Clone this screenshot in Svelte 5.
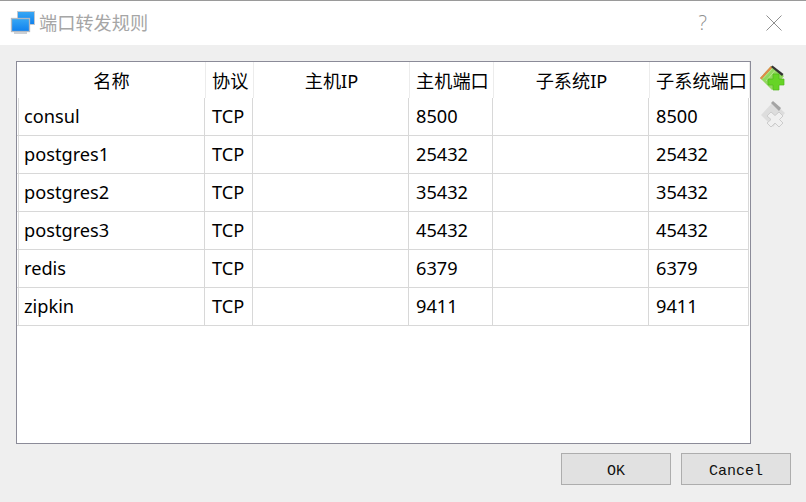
<script>
    const columns = [
        { label: '名称', width: 188, center: true },
        { label: '协议', width: 48 },
        { label: '主机IP', width: 156, center: true },
        { label: '主机端口', width: 84 },
        { label: '子系统IP', width: 156, center: true },
        { label: '子系统端口', width: 100 }
    ]
    const rows = [
        ['consul', 'TCP', '', '8500', '', '8500'],
        ['postgres1', 'TCP', '', '25432', '', '25432'],
        ['postgres2', 'TCP', '', '35432', '', '35432'],
        ['postgres3', 'TCP', '', '45432', '', '45432'],
        ['redis', 'TCP', '', '6379', '', '6379'],
        ['zipkin', 'TCP', '', '9411', '', '9411']
    ]
    const template = columns.map((c) => c.width + 'px').join(' ')
</script>

<div class="dialog">
    <div class="titlebar">
        <svg class="app-icon" width="26" height="26" viewBox="0 0 26 26">
            <defs>
                <linearGradient id="screen" x1="0" y1="0" x2="0" y2="1">
                    <stop offset="0" stop-color="#38a8f4" />
                    <stop offset="1" stop-color="#0f80ee" />
                </linearGradient>
            </defs>
            <rect x="7.500" y="1.500" width="17" height="13" fill="url(#screen)" stroke="#c2c8d0" />
            <rect x="1.500" y="8.500" width="18" height="13" fill="url(#screen)" stroke="#b4bac2" stroke-width="1.300" />
            <path d="M4 22h13v2H4z" fill="#cdd0d4" />
        </svg>
        <span class="title">端口转发规则</span>
        <span class="help">?</span>
        <svg class="close" width="16" height="16" viewBox="0 0 16 16">
            <path d="M.5.5l15 15M15.500.5l-15 15" stroke="#8f8f8f" fill="none" />
        </svg>
    </div>

    <div class="content">
        <div class="frame">
            <div class="row head" style="grid-template-columns: {template}">
                {#each columns as col}
                    <div class="cell" class:center={col.center}>{col.label}</div>
                {/each}
            </div>
            {#each rows as row}
                <div class="row body-row" style="grid-template-columns: {template}">
                    {#each row as value}
                        <div class="cell">{value}</div>
                    {/each}
                </div>
            {/each}
        </div>

        <div class="tools">
            <svg width="28" height="28" viewBox="0 0 28 28">
                <path d="M1 14L12 2l13 10-12 14z" fill="#92d860" />
                <path d="M1 14L12 2l1.500 1.500L2.500 15.500z" fill="#e08a4a" />
                <path d="M4 14.500L13.500 4.500M7 17L16 6.500" stroke="#b6e88e" fill="none" />
                <path d="M12 3l1.500-1.500 11 8.500-1.500 2z" fill="#333" />
                <path d="M14 10h6v5h5v6h-5v5h-6v-5H9v-6h5z" fill="#66d426" stroke="#52b81c" stroke-width=".7" />
            </svg>
            <svg width="28" height="28" viewBox="0 0 28 28">
                <path d="M2 15L14 2l12 11-12 14z" fill="#dddddd" />
                <path d="M12 3l2-2 8 7-2 3z" fill="#a4a4a4" />
                <path d="M8 16l4-4 4 3.500 4-3.500 4 4-3.500 3.500L24 23l-4 4-4-4-4 4-4-4 4-3.500z" fill="#f0f0f0" stroke="#cccccc" />
            </svg>
        </div>
    </div>

    <div class="footer">
        <button>OK</button>
        <button>Cancel</button>
    </div>
</div>

<style>
    :global(body) {
        margin: 0;
        background: #efefef;
    }

    .dialog {
        width: 806px;
        height: 502px;
        display: flex;
        flex-direction: column;
        background: #efefef;
        font-family: "Noto Sans", "Noto Sans CJK SC", sans-serif;
        color: #000;
        overflow: hidden;
    }

    .titlebar {
        height: 44px;
        flex: none;
        display: flex;
        align-items: center;
        background: #fff;
        border-top: 1px solid #9a9a9a;
        padding-left: 10px;
    }

    .app-icon {
        margin-right: 3px;
    }

    .title {
        font-size: 18.2px;
        color: #a6a6a6;
        padding-bottom: 2px;
    }

    .help {
        margin-left: auto;
        margin-right: 59px;
        font-family: "Open Sans", sans-serif;
        font-size: 20px;
        font-weight: 300;
        color: #8f8f8f;
        padding-bottom: 2px;
    }

    .close {
        margin-right: 24px;
    }

    .content {
        display: flex;
        gap: 8px;
        padding: 16px 0 0 16px;
    }

    .frame {
        width: 733px;
        height: 381px;
        background: #fff;
        border: 1px solid #8b8b98;
    }

    .row {
        display: grid;
        font-size: 18.2px;
    }

    .head {
        height: 36px;
    }

    .head .cell {
        height: 36px;
        padding-left: 6px;
        padding-bottom: 1px;
        border-bottom: none;
        border-right: 1px solid #ececec;
        position: relative;
        left: 1px;
    }

    .head .center {
        padding-left: 0;
    }

    .body-row {
        height: 38px;
    }

    .body-row .cell:first-child {
        background: linear-gradient(#dcdcdc, #dcdcdc) 1px 0 / 1px 100% no-repeat;
    }

    .cell {
        box-sizing: border-box;
        display: flex;
        align-items: center;
        padding-left: 7px;
        padding-bottom: 2px;
        height: 38px;
        border-right: 1px solid #d8d8d8;
        border-bottom: 1px solid #d8d8d8;
        white-space: nowrap;
    }

    .center {
        justify-content: center;
        padding-left: 0;
    }

    .tools {
        display: flex;
        flex-direction: column;
        gap: 8px;
        padding-top: 3px;
    }

    .footer {
        display: flex;
        justify-content: flex-end;
        gap: 10px;
        padding: 9px 15px 0 0;
    }

    button {
        width: 110px;
        height: 32px;
        padding: 5px 0 0;
        background: #e1e1e1;
        border: 1px solid #adadad;
        border-radius: 0;
        font-family: "Liberation Mono", monospace;
        font-size: 15px;
        color: #111;
    }
</style>
